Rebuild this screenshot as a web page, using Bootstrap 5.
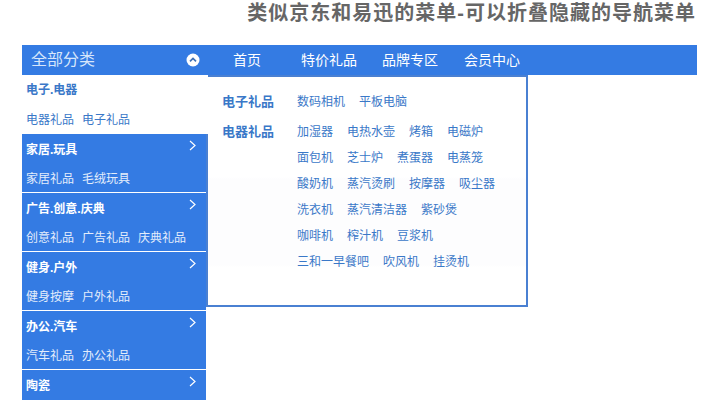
<!DOCTYPE html>
<html lang="zh"><head><meta charset="utf-8">
<link href="https://cdn.jsdelivr.net/npm/bootstrap@5.3.0/dist/css/bootstrap.min.css" rel="stylesheet">
<style>
body{background:#fff;font-family:"Liberation Sans","Noto Sans CJK SC",sans-serif;font-size:12px;color:#3a78c8;overflow:hidden}
a{text-decoration:none;color:inherit}
.page-title{font-size:20px;font-weight:700;color:#666;height:45px;padding:1px 24px 0 0;line-height:24px;letter-spacing:1px;margin:0}
.wrap{width:675px;margin-left:22px;position:relative}
.topbar{height:30px;background:#347be3;color:#fff}
.all-cat{width:186px;padding:0 8px 0 9px;font-size:16px;color:#d6e6fb}
.top-links{padding-left:25px;gap:25px;font-size:14px;line-height:30px}
.first-gap{margin-left:15px}
.last-gap{margin-left:1px}
.side{width:186px;height:325px;overflow:hidden}
.side-item{width:184px;height:59px;background:#347be3;color:#e3edfb;border-bottom:1px solid #fff;padding:6px 7px 0 4px}
.side-item.on{background:#fff;color:#3a78c8;border:0;width:186px;position:relative;z-index:2;padding-top:5px}
.side-name{font-size:12px;font-weight:700;color:#fff;line-height:20px;height:20px}
.on .side-name{color:#3a78c8}
.side-subs{gap:8px;line-height:18px;margin-top:10px}
.on .side-subs{margin-top:11px}
.flyout{position:absolute;left:184px;top:30px;width:322px;height:232px;border:2px solid #4a80d2;padding:12px 0 0 14px;z-index:1;background:linear-gradient(#fff 100px,#fdfdfe 102px,#fdfdfe 188px,#fff 190px)}
.fly-row{line-height:26px}
.fly-row.gapped{margin-bottom:4px}
.fly-head{width:75px;font-size:13px;font-weight:700;flex:none}
.fly-links{column-gap:14px}
.fly-line{column-gap:14px}
</style></head><body>
<h1 class="page-title text-end">类似京东和易迅的菜单-可以折叠隐藏的导航菜单</h1>
<div class="wrap">
 <div class="topbar d-flex">
  <div class="all-cat d-flex align-items-center justify-content-between">全部分类
   <svg width="14" height="14" viewBox="0 0 14 14"><circle cx="7" cy="7" r="6.5" fill="#fff"/><path d="M4 8.4 7 5.4 10 8.4" fill="none" stroke="#3d6fb5" stroke-width="1.6"/></svg>
  </div>
  <div class="top-links d-flex"><a href="#">首页</a><a href="#" class="first-gap">特价礼品</a><a href="#">品牌专区</a><a href="#" class="last-gap">会员中心</a></div>
 </div>
 <div class="side">
  <div class="side-item on"><div class="side-name">电子.电器</div><div class="side-subs d-flex"><a href="#">电器礼品</a><a href="#">电子礼品</a></div></div>
  <div class="side-item"><div class="side-name d-flex justify-content-between">家居.玩具<svg width="14" height="12" viewBox="0 0 14 12"><path d="M5 1 10 5.5 5 10" fill="none" stroke="#fff" stroke-width="1.2"/></svg></div><div class="side-subs d-flex"><a href="#">家居礼品</a><a href="#">毛绒玩具</a></div></div>
  <div class="side-item"><div class="side-name d-flex justify-content-between">广告.创意.庆典<svg width="14" height="12" viewBox="0 0 14 12"><path d="M5 1 10 5.5 5 10" fill="none" stroke="#fff" stroke-width="1.2"/></svg></div><div class="side-subs d-flex"><a href="#">创意礼品</a><a href="#">广告礼品</a><a href="#">庆典礼品</a></div></div>
  <div class="side-item"><div class="side-name d-flex justify-content-between">健身.户外<svg width="14" height="12" viewBox="0 0 14 12"><path d="M5 1 10 5.5 5 10" fill="none" stroke="#fff" stroke-width="1.2"/></svg></div><div class="side-subs d-flex"><a href="#">健身按摩</a><a href="#">户外礼品</a></div></div>
  <div class="side-item"><div class="side-name d-flex justify-content-between">办公.汽车<svg width="14" height="12" viewBox="0 0 14 12"><path d="M5 1 10 5.5 5 10" fill="none" stroke="#fff" stroke-width="1.2"/></svg></div><div class="side-subs d-flex"><a href="#">汽车礼品</a><a href="#">办公礼品</a></div></div>
  <div class="side-item"><div class="side-name d-flex justify-content-between">陶瓷<svg width="14" height="12" viewBox="0 0 14 12"><path d="M5 1 10 5.5 5 10" fill="none" stroke="#fff" stroke-width="1.2"/></svg></div></div>
 </div>
 <div class="flyout">
  <div class="fly-row gapped d-flex"><div class="fly-head">电子礼品</div><div class="fly-links d-flex"><a href="#">数码相机</a><a href="#">平板电脑</a></div></div>
  <div class="fly-row d-flex"><div class="fly-head">电器礼品</div><div class="fly-links">
   <div class="fly-line d-flex"><a href="#">加湿器</a><a href="#">电热水壶</a><a href="#">烤箱</a><a href="#">电磁炉</a></div>
   <div class="fly-line d-flex"><a href="#">面包机</a><a href="#">芝士炉</a><a href="#">煮蛋器</a><a href="#">电蒸笼</a></div>
   <div class="fly-line d-flex"><a href="#">酸奶机</a><a href="#">蒸汽烫刷</a><a href="#">按摩器</a><a href="#">吸尘器</a></div>
   <div class="fly-line d-flex"><a href="#">洗衣机</a><a href="#">蒸汽清洁器</a><a href="#">紫砂煲</a></div>
   <div class="fly-line d-flex"><a href="#">咖啡机</a><a href="#">榨汁机</a><a href="#">豆浆机</a></div>
   <div class="fly-line d-flex"><a href="#">三和一早餐吧</a><a href="#">吹风机</a><a href="#">挂烫机</a></div>
  </div></div>
 </div>
</div>
<script src="https://cdn.jsdelivr.net/npm/bootstrap@5.3.0/dist/js/bootstrap.bundle.min.js"></script>
</body></html>
